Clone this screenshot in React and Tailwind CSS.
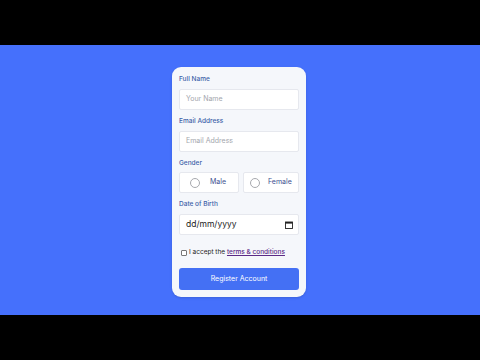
export default function App() {
  return (
    <div className="w-[480px] h-[360px] bg-black flex flex-col" style={{ fontFamily: 'Inter, "Open Sans", sans-serif' }}>
      <div className="h-[45px]" />
      <div className="flex-1 bg-[#4570fc] flex justify-center pt-[22px] pr-[2px]">
        <div className="w-[134px] h-[230px] bg-[#f5f7fb] rounded-[9px] shadow-sm px-[7px] pt-[6px] pb-[7px] flex flex-col">
          <Field label="Full Name">
            <div className="h-[21px] bg-white border border-[#e6e8ee] rounded-[2px] flex items-center px-[6px] text-[7px] text-[#a3a6ad]">Your Name</div>
          </Field>
          <div className="h-[5px]" />
          <Field label="Email Address">
            <div className="h-[21px] bg-white border border-[#e6e8ee] rounded-[2px] flex items-center px-[6px] text-[7px] text-[#a3a6ad]">Email Address</div>
          </Field>
          <div className="h-[5px]" />
          <Field label="Gender" gap="h-[1px]">
            <div className="flex gap-[4px] h-[21px]">
              <div className="flex-1 bg-white border border-[#e6e8ee] rounded-[2px] flex items-center pl-[10px]">
                <span className="w-[10px] h-[10px] rounded-full border border-[#a7a9ae]" />
                <span className="ml-[10px] text-[7px] text-[#3c4f8f]">Male</span>
              </div>
              <div className="flex-1 bg-white border border-[#e6e8ee] rounded-[2px] flex items-center pl-[6px]">
                <span className="w-[10px] h-[10px] rounded-full border border-[#a7a9ae]" />
                <span className="ml-[8px] text-[7px] text-[#3c4f8f]">Female</span>
              </div>
            </div>
          </Field>
          <div className="h-[5px]" />
          <Field label="Date of Birth">
            <div className="h-[21px] bg-white border border-[#e6e8ee] rounded-[2px] flex items-center justify-between pl-[6px] pr-[5px] text-[8.5px] text-[#222]">
              <span>dd/mm/yyyy</span>
              <svg width="8" height="8" viewBox="0 0 8 8" fill="none">
                <rect x="0.5" y="1" width="7" height="6.5" stroke="#222" strokeWidth="0.9" />
                <rect x="0.5" y="1" width="7" height="1.6" fill="#222" />
              </svg>
            </div>
          </Field>
          <div className="mt-[13px] h-[10px] flex items-center pl-[2px] text-[6.5px] text-[#222]">
            <span className="w-[6px] h-[6px] border border-[#777] rounded-[1px] bg-white" />
            <span className="ml-[2px]">I accept the <span className="underline text-[#5b2a86] font-medium">terms &amp; conditions</span></span>
          </div>
          <div className="mt-[10px] h-[22px] bg-[#4470f4] rounded-[3px] flex items-center justify-center text-white text-[7px]">Register Account</div>
        </div>
      </div>
      <div className="h-[45px]" />
    </div>
  );
}

function Field({ label, children, gap = 'h-[2px]' }) {
  return (
    <div className="flex flex-col">
      <div className="h-[14px] flex items-center text-[6.5px] font-medium text-[#3d5fa8]">{label}</div>
      <div className={gap} />
      {children}
    </div>
  );
}
